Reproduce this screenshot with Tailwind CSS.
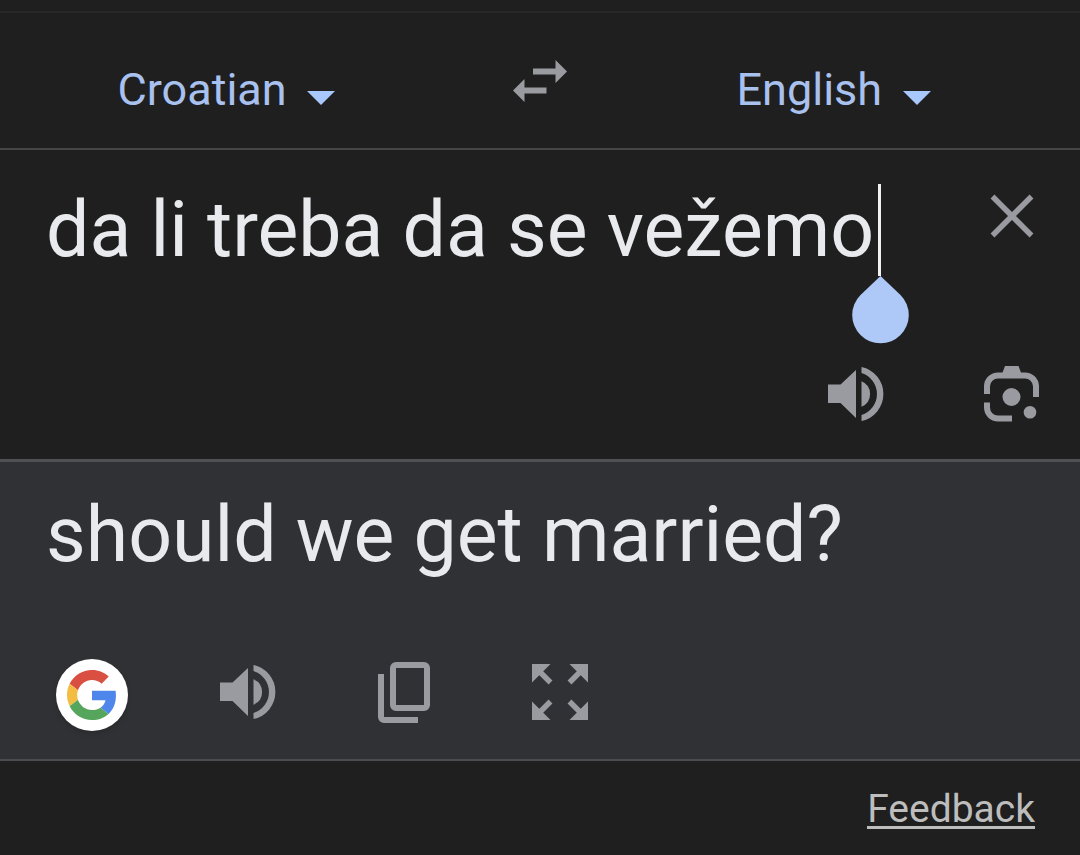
<!DOCTYPE html>
<html lang="en">

<head>
    <meta charset="UTF-8">
    <meta name="viewport" content="width=device-width, initial-scale=1.0">
    <title>Translate</title>
    <script src="https://cdn.jsdelivr.net/npm/@tailwindcss/browser@4"></script>
</head>

<body class="min-h-screen bg-[#1f1f1f] font-[Roboto,sans-serif] text-[#e8eaed]">

    <!-- language bar -->
    <header class="mt-[11px] grid grid-cols-[11fr_4fr_11fr] items-center border-t-2 border-b-2 border-t-[#28282b] border-b-[#444547] h-[139px] text-[#a8c7fa]">
        <div class="flex items-baseline justify-center gap-5 pt-[18px] pr-1">
            <select aria-label="Source language" class="appearance-none bg-transparent text-[45px] leading-[52px] text-[#a9c1ee] outline-none">
                <option>Croatian</option>
            </select>
            <svg class="h-[14px] w-7" viewBox="0 0 28 14" fill="currentColor"><path d="M0 0h28L14 14z" /></svg>
        </div>

        <button type="button" aria-label="Swap languages" class="flex justify-center text-[#9a9ba0]">
            <svg class="h-[42px] w-[54px]" viewBox="0 0 54 42" fill="currentColor">
                <path d="M20 8.500h22.500V0L54 11.500 42.500 23v-8.500H20z" />
                <path d="M33.500 27.500H11.500V19L0 30.500 11.500 42v-8.500h22z" />
            </svg>
        </button>

        <div class="flex items-baseline justify-center gap-5 pt-[18px] pr-9">
            <select aria-label="Target language" class="appearance-none bg-transparent text-[45px] leading-[52px] text-[#a9c1ee] outline-none">
                <option>English</option>
            </select>
            <svg class="h-[14px] w-7" viewBox="0 0 28 14" fill="currentColor"><path d="M0 0h28L14 14z" /></svg>
        </div>
    </header>

    <main>
        <!-- source text -->
        <section class="flex h-[312px] flex-col justify-between border-b-[3px] border-[#505154] pt-[30px] pr-8 pb-[29px] pl-[46px]">
            <div class="flex items-start justify-between">
                <div class="relative flex-1">
                    <textarea aria-label="Source text" rows="1" spellcheck="false" class="block h-25 w-full resize-none overflow-hidden bg-transparent text-[77px] leading-[100px] whitespace-nowrap outline-none">da li treba da se vežemo</textarea>
                    <!-- caret and its drag handle -->
                    <div class="absolute top-1 left-[832px] h-[92px] w-[3px] bg-[#f1f1f1]"></div>
                    <svg class="absolute top-24 left-[806px] h-[68px] w-[57px] text-[#aec8f8]" viewBox="0 0 57 68" fill="currentColor"><path d="M28.500 0L48.500 19A28.300 28.300 0 1 1 8.500 19z" /></svg>
                </div>
                <button type="button" aria-label="Clear" class="flex h-[72px] w-[72px] items-center justify-center text-[#9a9ba0]">
                    <svg class="h-11 w-11" viewBox="0 0 44 44" fill="none" stroke="currentColor" stroke-width="5.500"><path d="M2.500 2.500l39 39M41.500 2.500l-39 39" /></svg>
                </button>
            </div>

            <div class="flex justify-end gap-[84px] text-[#9a9ba0]">
                <button type="button" aria-label="Listen to source" class="flex h-[72px] w-[72px] items-center justify-center">
                    <svg class="h-[54px] w-14" viewBox="0 0 56 54" fill="currentColor">
                        <path d="M0 17.500h12.500L28 3v48L12.500 36H0z" />
                        <path d="M33.500 14.300A13.700 13.700 0 0 1 33.500 39.700z" />
                        <path d="M33.500 0A27.600 27.600 0 0 1 33.500 54V48A22 22 0 0 0 33.500 6z" />
                    </svg>
                </button>
                <button type="button" aria-label="Search with camera" class="flex h-[72px] w-[72px] items-center justify-center">
                    <svg class="h-14 w-14" viewBox="0 0 56 56" fill="currentColor">
                        <path d="M3 28v-8A11 11 0 0 1 14 9.500h27A11 11 0 0 1 52 20v11M3 36.500v5A11 11 0 0 0 14 52.500h14" fill="none" stroke="currentColor" stroke-width="6" />
                        <path d="M18 8L21 0h13.500l3 8z" />
                        <circle cx="27.500" cy="31" r="9" />
                        <circle cx="46" cy="46.300" r="6.300" />
                    </svg>
                </button>
            </div>
        </section>

        <!-- translation -->
        <section class="flex h-[299px] flex-col justify-between border-b-2 border-[#4b4c4f] bg-[#303134] pt-[23px] pr-8 pb-7 pl-[46px]">
            <p class="text-[77px] leading-[100px]">should we get married?</p>

            <div class="flex gap-[84px] pl-[10px] text-[#9a9ba0]">
                <button type="button" aria-label="Google" class="flex h-[72px] w-[72px] items-center justify-center rounded-full bg-white shadow-md">
                    <svg class="h-[52px] w-[50px]" viewBox="0 0 48 48">
                        <path fill="#d94f41" d="M24 9.500c3.540 0 6.710 1.220 9.210 3.600l6.850-6.850C35.900 2.380 30.470 0 24 0 14.620 0 6.510 5.380 2.560 13.220l7.980 6.190C12.430 13.720 17.740 9.500 24 9.500z" />
                        <path fill="#4f86ec" d="M46.980 24.550c0-1.570-.15-3.090-.38-4.550H24v9.020h12.940c-.58 2.960-2.260 5.480-4.780 7.180l7.730 6c4.510-4.180 7.090-10.360 7.090-17.650z" />
                        <path fill="#f2bd42" d="M10.530 28.590c-.48-1.450-.76-2.990-.76-4.590s.27-3.140.76-4.590l-7.980-6.190C.92 16.460 0 20.120 0 24c0 3.880.92 7.540 2.560 10.780l7.970-6.190z" />
                        <path fill="#56a55c" d="M24 48c6.480 0 11.930-2.130 15.890-5.810l-7.730-6c-2.150 1.450-4.920 2.300-8.160 2.300-6.260 0-11.570-4.220-13.470-9.910l-7.980 6.190C6.510 42.620 14.620 48 24 48z" />
                    </svg>
                </button>
                <button type="button" aria-label="Listen to translation" class="flex h-[66px] w-[72px] items-center justify-center">
                    <svg class="h-[54px] w-14" viewBox="0 0 56 54" fill="currentColor">
                        <path d="M0 17.500h12.500L28 3v48L12.500 36H0z" />
                        <path d="M33.500 14.300A13.700 13.700 0 0 1 33.500 39.700z" />
                        <path d="M33.500 0A27.600 27.600 0 0 1 33.500 54V48A22 22 0 0 0 33.500 6z" />
                    </svg>
                </button>
                <button type="button" aria-label="Copy" class="flex h-[66px] w-[72px] items-center justify-center">
                    <svg class="h-[61px] w-[52px]" viewBox="0 0 52 61" fill="none" stroke="currentColor" stroke-width="6">
                        <rect x="15" y="3" width="34" height="43" rx="3" />
                        <path d="M3 12v43a3 3 0 0 0 3 3h34" />
                    </svg>
                </button>
                <button type="button" aria-label="Full screen" class="flex h-[66px] w-[72px] items-center justify-center">
                    <svg class="h-14 w-14" viewBox="0 0 56 56" fill="currentColor">
                        <path d="M0 0h18.500L0 18.500zM56 0v18.500L37.500 0zM0 56V37.500L18.500 56zM56 56H37.500L56 37.500z" />
                        <path d="M6 6l12.500 12.500M50 6L37.500 18.500M6 50l12.500-12.500M50 50L37.500 37.500" stroke="currentColor" stroke-width="5.500" />
                    </svg>
                </button>
            </div>
        </section>
    </main>

    <footer class="flex justify-end pt-[31px] pr-[45px]">
        <a href="#" class="border-b-[3px] border-[#bdbdbd] text-[39px] leading-[34px] text-[#bdbdbd]">Feedback</a>
    </footer>

</body>

</html>
